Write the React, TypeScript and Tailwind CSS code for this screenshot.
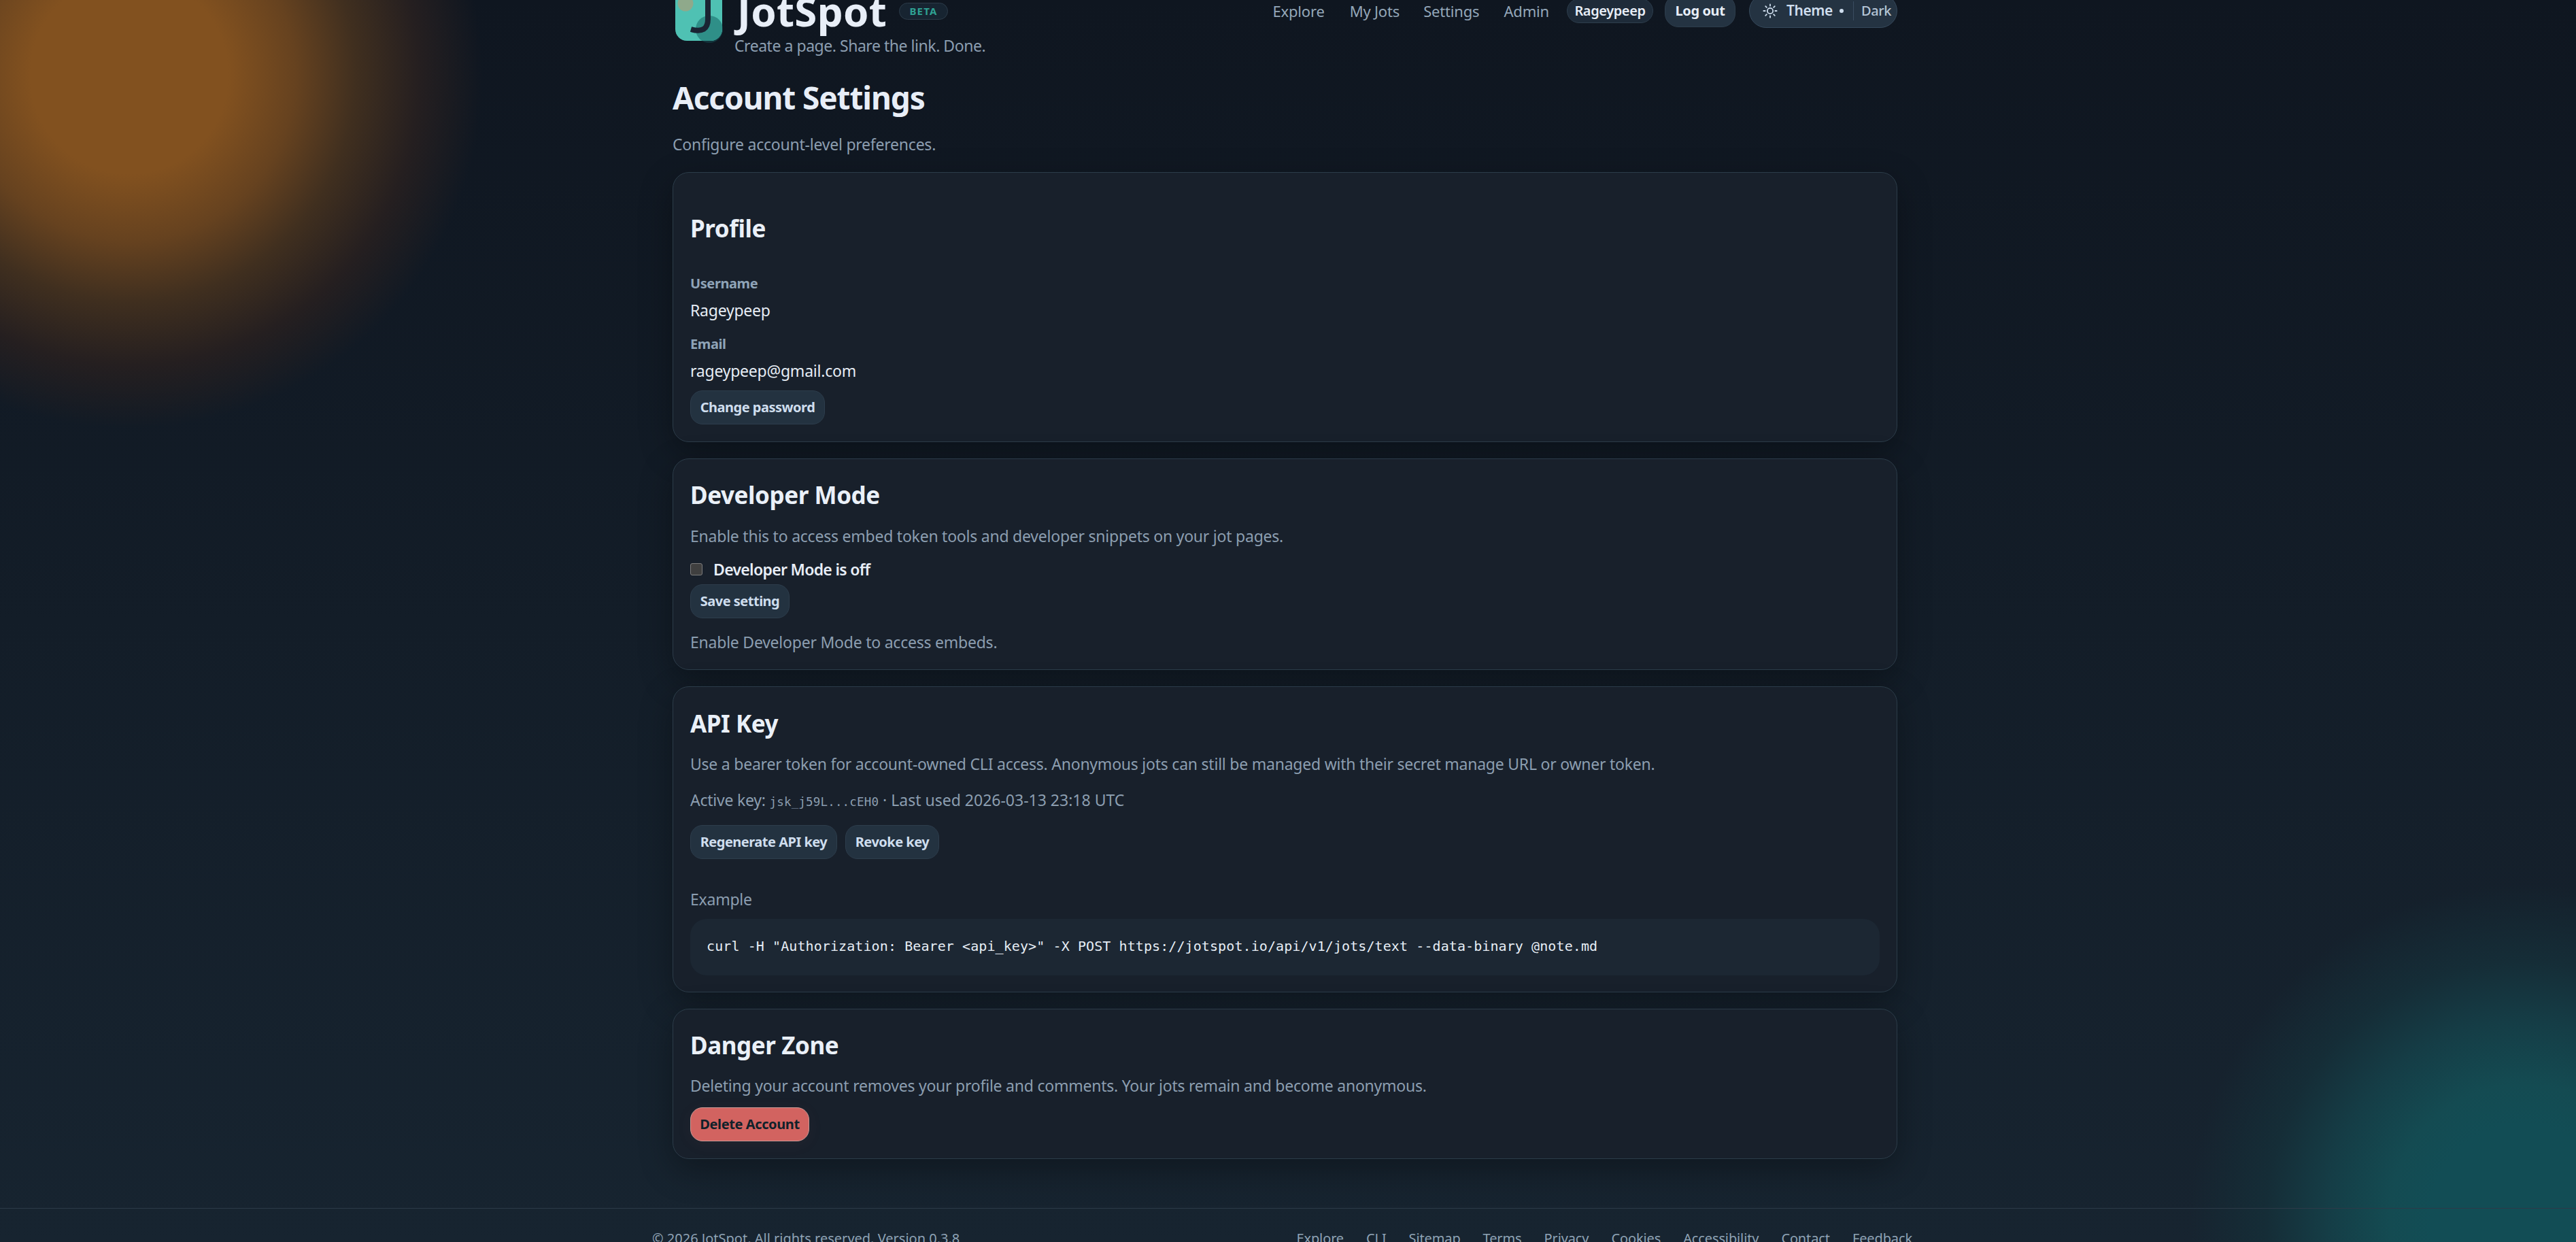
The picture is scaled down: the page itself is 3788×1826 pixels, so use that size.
import React from "react";

const sans = "font-['Noto_Sans',sans-serif]";
const mono = "font-['DejaVu_Sans_Mono',monospace]";

function Btn({ children, w, mt = "" }: { children: React.ReactNode; w?: string; mt?: string }) {
  return (
    <button className={`block h-[50px] ${w ?? ""} ${mt} rounded-[18px] border border-[#2d3d4c] bg-[#233240] text-[20px] font-bold leading-none text-[#cfdeee] tracking-[-0.025em]`}>
      {children}
    </button>
  );
}

function Para({ children, mt }: { children: React.ReactNode; mt: string }) {
  return <p className={`${mt} -translate-y-px text-[23px] leading-[36px] tracking-[-0.01em] text-[#8c9eb0]`}>{children}</p>;
}

function H2({ children, mt }: { children: React.ReactNode; mt: string }) {
  return <h2 className={`${mt} text-[35px] font-bold leading-[44px] tracking-[-0.012em] text-[#eaf0f8]`}>{children}</h2>;
}

function Card({ children, pb }: { children: React.ReactNode; pb: string }) {
  return (
    <section className={`mt-[24px] rounded-[24px] border border-[#2c3c49] bg-[#18202b] px-[25px] ${pb} shadow-[0_16px_50px_rgba(0,0,0,0.32)]`}>
      {children}
    </section>
  );
}

function Logo() {
  return (
    <svg width="76" height="96" viewBox="0 0 76 96" className="ml-[4px] shrink-0">
      <defs>
        <clipPath id="tile">
          <rect x="0" y="0" width="69" height="90" rx="17" />
        </clipPath>
      </defs>
      <circle cx="50" cy="73" r="20" fill="#13343c" />
      <rect x="0" y="0" width="69" height="90" rx="17" fill="#4fc1b3" />
      <circle cx="15" cy="35" r="11.5" fill="#8fa98b" />
      <circle cx="50" cy="73" r="20" fill="#2f8f88" clipPath="url(#tile)" />
      <path d="M48 0V58Q48 80 23 73" fill="none" stroke="#1a2433" strokeWidth="8" />
    </svg>
  );
}

function Sun() {
  return (
    <svg width="22" height="22" viewBox="0 0 24 24" fill="none" stroke="#cfdeee" strokeWidth="2" strokeLinecap="round" className="shrink-0">
      <circle cx="12" cy="12" r="4.5" />
      <path d="M12 1.5v2.5M12 20v2.5M1.5 12h2.5M20 12h2.5M4.6 4.6l1.8 1.8M17.6 17.6l1.8 1.8M4.6 19.4l1.8-1.8M17.6 6.4l1.8-1.8" />
    </svg>
  );
}

const footerLinks = ["Explore", "CLI", "Sitemap", "Terms", "Privacy", "Cookies", "Accessibility", "Contact", "Feedback"];

export default function App() {
  return (
    <div
      className={`${sans} h-[1826px] overflow-hidden bg-[radial-gradient(circle_520px_at_190px_110px,#82511f_0%,#82511f_28%,#66421f_47%,#402f1f_64%,#251f20_82%,transparent_100%),radial-gradient(circle_490px_at_3710px_1790px,#124d55_0%,#124d55_28%,#144b52_40%,#153d46_59%,#152d37_77%,transparent_100%),linear-gradient(180deg,#0f1620_0%,#172430_100%)]`}
    >
      <div className="ml-[989px] w-[1801px]">
        <header className="-mt-[30px] flex h-[143px] items-start">
          <Logo />
          <div className="ml-[11px] mt-[10px] w-[500px]">
            <div className="flex items-center">
              <span className="ml-[4px] text-[60px] font-bold leading-[72px] tracking-[0.005em] text-[#e8eef7]">JotSpot</span>
              <span className="ml-[18px] flex h-[25px] w-[72px] items-center justify-center rounded-full border border-[#2c3b49] bg-[#172431] text-[15px] font-bold tracking-[0.08em] text-[#2fa193]">
                BETA
              </span>
            </div>
            <p className="-mt-[1px] text-[23px] leading-[32px] tracking-[-0.02em] text-[#8c9eb0]">Create a page. Share the link. Done.</p>
          </div>
          <nav className="ml-auto mt-[21px] flex items-center text-[22px] tracking-[-0.008em] text-[#94a7b9]">
            <a className="mr-[37px]">Explore</a>
            <a className="mr-[35px]">My Jots</a>
            <a className="mr-[36px]">Settings</a>
            <a className="mr-[26px]">Admin</a>
            <span className="mr-[17px] flex h-[36px] w-[127px] items-center justify-center rounded-full border border-[#2d3d4c] bg-[#1e2b39] text-[20px] font-semibold tracking-[-0.02em] text-[#e8eef7]">Rageypeep</span>
            <span className="mr-[20px] flex h-[48px] w-[104px] items-center justify-center rounded-[20px] border border-[#2d3d4c] bg-[#243342] text-[20px] font-bold tracking-[-0.02em] text-[#e8eef7]">Log out</span>
            <span className="flex h-[50px] w-[218px] items-center rounded-full border border-[#36495c] bg-[#243342] pl-[19px] text-[21px] font-semibold tracking-[-0.02em] text-[#cfdeee]">
              <Sun />
              <span className="ml-[13px]">Theme</span>
              <span className="ml-[10px] h-[6px] w-[6px] rounded-full bg-[#cfdeee]" />
              <span className="ml-[14px] h-[28px] w-px bg-[#3a4d60]" />
              <span className="ml-[11px] text-[20px] font-medium text-[#b5c5d6]">Dark</span>
            </span>
          </nav>
        </header>

        <h1 className="text-[46px] font-bold leading-[60px] tracking-[-0.024em] text-[#e8eef7]">Account Settings</h1>
        <Para mt="mt-[22px]">Configure account-level preferences.</Para>

        <div className="-mt-[2px]">
          <Card pb="pb-[25px]">
            <H2 mt="mt-[60px]">Profile</H2>
            <div className="mt-[45px] text-[20px] font-bold leading-[28px] tracking-[-0.02em] text-[#8fa4b8]">Username</div>
            <div className="mt-[7px] text-[23px] leading-[36px] tracking-[-0.01em] text-[#e6edf5]">Rageypeep</div>
            <div className="mt-[18px] text-[20px] font-bold leading-[28px] tracking-[-0.02em] text-[#8fa4b8]">Email</div>
            <div className="mt-[7px] text-[23px] leading-[36px] tracking-[-0.01em] text-[#e6edf5]">rageypeep@gmail.com</div>
            <Btn w="w-[198px]" mt="mt-[11px]">Change password</Btn>
          </Card>

          <Card pb="pb-[21px]">
            <H2 mt="mt-[31px]">Developer Mode</H2>
            <Para mt="mt-[21px]">Enable this to access embed token tools and developer snippets on your jot pages.</Para>
            <label className="mt-[13px] flex h-[36px] items-center -translate-y-px">
              <span className="h-[18px] w-[18px] rounded-[3px] border border-[#7c7c7c] bg-[#3f3f3f]" />
              <span className="ml-[16px] text-[23px] font-semibold tracking-[-0.03em] text-[#e8eef7]">Developer Mode is off</span>
            </label>
            <Btn w="w-[146px]" mt="mt-[3px]">Save setting</Btn>
            <Para mt="mt-[18px]">Enable Developer Mode to access embeds.</Para>
          </Card>

          <Card pb="pb-[24px]">
            <H2 mt="mt-[32px]">API Key</H2>
            <Para mt="mt-[20px]">Use a bearer token for account-owned CLI access. Anonymous jots can still be managed with their secret manage URL or owner token.</Para>
            <div className="mt-[17px] flex h-[36px] -translate-y-px items-baseline text-[23px] leading-[36px] tracking-[-0.01em] text-[#8c9eb0]">
              <span className="whitespace-pre">Active key: </span>
              <code className={`${mono} text-[17.5px] tracking-[0.17px]`}>jsk_j59L...cEH0</code>
              <span className="whitespace-pre tracking-normal"> · Last used 2026-03-13 23:18 UTC</span>
            </div>
            <div className="mt-[18px] flex gap-[12px]">
              <Btn w="w-[216px]">Regenerate API key</Btn>
              <Btn w="w-[138px]">Revoke key</Btn>
            </div>
            <Para mt="mt-[42px]">Example</Para>
            <pre className={`${mono} mt-[10px] flex h-[83px] items-center rounded-[24px] bg-[#1c2733] pb-[3px] pl-[24px] text-[20px] font-normal tracking-[0.09px] text-[#e6edf5]`}>
              {'curl -H "Authorization: Bearer <api_key>" -X POST https://jotspot.io/api/v1/jots/text --data-binary @note.md'}
            </pre>
          </Card>

          <Card pb="pb-[25px]">
            <H2 mt="mt-[31px]">Danger Zone</H2>
            <Para mt="mt-[20px]">Deleting your account removes your profile and comments. Your jots remain and become anonymous.</Para>
            <button className="mt-[13px] block h-[50px] w-[175px] rounded-[18px] border border-[#c99a96] bg-[#d26360] text-[20px] font-bold tracking-[-0.02em] text-[#10212a] shadow-[0_4px_24px_rgba(210,99,96,0.06)]">
              Delete Account
            </button>
          </Card>
        </div>
      </div>

      <footer className="mt-[72px] border-t border-[#2c3a48] pl-[959px] pr-[976px] pt-[30px]">
        <div className="flex items-center justify-between text-[20px] leading-[28px] text-[#8fa3b5]">
          <span>© 2026 JotSpot. All rights reserved. Version 0.3.8</span>
          <div className="flex gap-[33px] tracking-[-0.006em]">
            {footerLinks.map((l) => (
              <a key={l}>{l}</a>
            ))}
          </div>
        </div>
      </footer>
    </div>
  );
}
